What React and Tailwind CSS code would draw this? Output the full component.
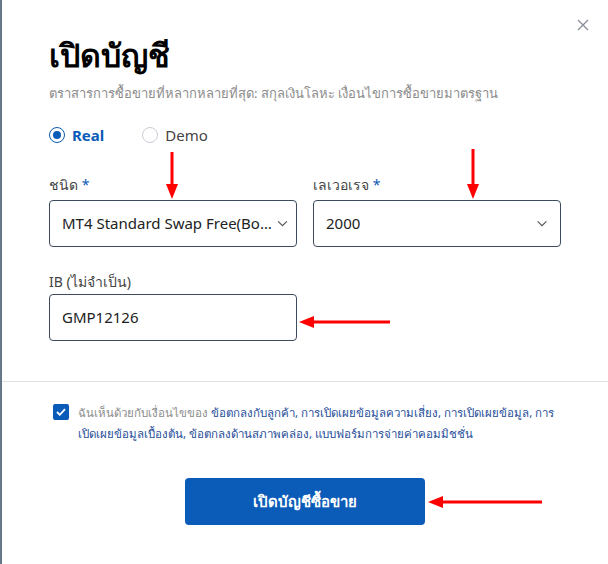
import React, { useState } from "react";

const ChevronDown = ({ className }) => (
  <svg className={className} viewBox="0 0 12 8" fill="none" stroke="currentColor" strokeWidth="1.3">
    <path d="M1 1.5l5 5 5-5" />
  </svg>
);

const Arrows = () => (
  <svg className="pointer-events-none absolute left-0 top-0" width="608" height="564" viewBox="0 0 608 564">
    <g stroke="#f00" strokeWidth="3" fill="#f00">
      <line x1="170" y1="152" x2="170" y2="186" />
      <polygon points="164,184 176,184 170,199" stroke="none" />
      <line x1="471" y1="149" x2="471" y2="186" />
      <polygon points="465,184 477,184 471,199" stroke="none" />
      <line x1="388" y1="322" x2="310" y2="322" />
      <polygon points="312,316 312,328 297,322" stroke="none" />
      <line x1="540" y1="502" x2="439" y2="502" />
      <polygon points="441,496 441,508 426,502" stroke="none" />
    </g>
  </svg>
);

const App = () => {
  const [type, setType] = useState("real");
  const [agree, setAgree] = useState(true);

  return (
    <div
      className="relative h-[564px] w-[608px] overflow-hidden border-l-2 border-[#67778a] bg-white text-[#222]"
      style={{ fontFamily: '"Noto Sans", "Open Sans", sans-serif' }}
    >
      <button className="absolute right-[19px] top-[19px] text-[#8a9099]">
        <svg width="12" height="12" viewBox="0 0 12 12" stroke="currentColor" strokeWidth="1.4">
          <path d="M1 1l10 10M11 1L1 11" />
        </svg>
      </button>

      <div className="px-[47px] pt-[33px]">
        <h1 className="text-[32px] font-bold leading-[44px] text-black">เปิดบัญชี</h1>
        <p className="mt-[6px] text-[13px] leading-[20px] text-[#8c8c8c]">
          ตราสารการซื้อขายที่หลากหลายที่สุด: สกุลเงินโลหะ เงื่อนไขการซื้อขายมาตรฐาน
        </p>

        <div className="mt-[22px] flex items-center gap-[38px]">
          <label className="flex cursor-pointer items-center gap-[7px]" onClick={() => setType("real")}>
            <span className={`flex h-4 w-4 items-center justify-center rounded-full border-[1.5px] ${type === "real" ? "border-[#0b5bb8]" : "border-[#c9ced6]"}`}>
              {type === "real" && <span className="h-2 w-2 rounded-full bg-[#0b5bb8]" />}
            </span>
            <span className={`text-[15px] leading-5 ${type === "real" ? "font-bold text-[#0b5bb8]" : "text-[#444]"}`}>Real</span>
          </label>
          <label className="flex cursor-pointer items-center gap-[7px]" onClick={() => setType("demo")}>
            <span className={`flex h-4 w-4 items-center justify-center rounded-full border-[1.5px] ${type === "demo" ? "border-[#0b5bb8]" : "border-[#c9ced6]"}`}>
              {type === "demo" && <span className="h-2 w-2 rounded-full bg-[#0b5bb8]" />}
            </span>
            <span className={`text-[15px] leading-5 ${type === "demo" ? "font-bold text-[#0b5bb8]" : "text-[#444]"}`}>Demo</span>
          </label>
        </div>

        <div className="mt-[30px] grid grid-cols-2 gap-4">
          <div>
            <div className="text-[14px] leading-5 text-[#444]">
              ชนิด <span className="text-[#0b5bb8]">*</span>
            </div>
            <div className="mt-[5px] flex h-[47px] items-center rounded-[4px] border border-[#3d4b5e] pl-[12px] pr-[8px]">
              <span className="min-w-0 flex-1 truncate text-[15px] text-[#222]">MT4 Standard Swap Free(Bonus)</span>
              <ChevronDown className="ml-1 h-[7px] w-[11px] shrink-0 text-[#555]" />
            </div>
          </div>
          <div>
            <div className="text-[14px] leading-5 text-[#444]">
              เลเวอเรจ <span className="text-[#0b5bb8]">*</span>
            </div>
            <div className="mt-[5px] flex h-[47px] items-center rounded-[4px] border border-[#3d4b5e] pl-[12px] pr-[12px]">
              <span className="flex-1 text-[15px] text-[#222]">2000</span>
              <ChevronDown className="h-[7px] w-[12px] text-[#555]" />
            </div>
          </div>
        </div>

        <div className="mt-[25px] w-[248px]">
          <div className="text-[14px] leading-5 text-[#444]">IB (ไม่จำเป็น)</div>
          <div className="mt-[2px] flex h-[47px] items-center rounded-[4px] border border-[#3d4b5e] px-[12px]">
            <span className="text-[15px] text-[#222]">GMP12126</span>
          </div>
        </div>
      </div>

      <div className="mt-[40px] border-t border-[#e2e2e2]" />

      <div className="flex gap-[9px] pl-[51px] pr-[46px] pt-[20px]">
        <button
          onClick={() => setAgree(!agree)}
          className={`mt-[2px] flex h-4 w-4 shrink-0 items-center justify-center rounded-[2px] ${agree ? "bg-[#0b5bb8]" : "border border-[#c9ced6]"}`}
        >
          {agree && (
            <svg width="10" height="8" viewBox="0 0 10 8" fill="none" stroke="white" strokeWidth="1.8">
              <path d="M1 4l2.8 2.8L9 1.2" />
            </svg>
          )}
        </button>
        <p className="text-[11.5px] leading-[21px] text-[#8c8c8c]">
          ฉันเห็นด้วยกับเงื่อนไขของ{" "}
          <span className="text-[#1f4d9a]">
            ข้อตกลงกับลูกค้า, การเปิดเผยข้อมูลความเสี่ยง, การเปิดเผยข้อมูล, การเปิดเผยข้อมูลเบื้องต้น, ข้อตกลงด้านสภาพคล่อง, แบบฟอร์มการจ่ายค่าคอมมิชชั่น
          </span>
        </p>
      </div>

      <div className="mt-[34px] flex justify-center">
        <button className="h-[47px] w-[240px] rounded-[4px] bg-[#0b5bb8] text-[15px] font-bold text-white">
          เปิดบัญชีซื้อขาย
        </button>
      </div>

      <Arrows />
    </div>
  );
};

export default App;
